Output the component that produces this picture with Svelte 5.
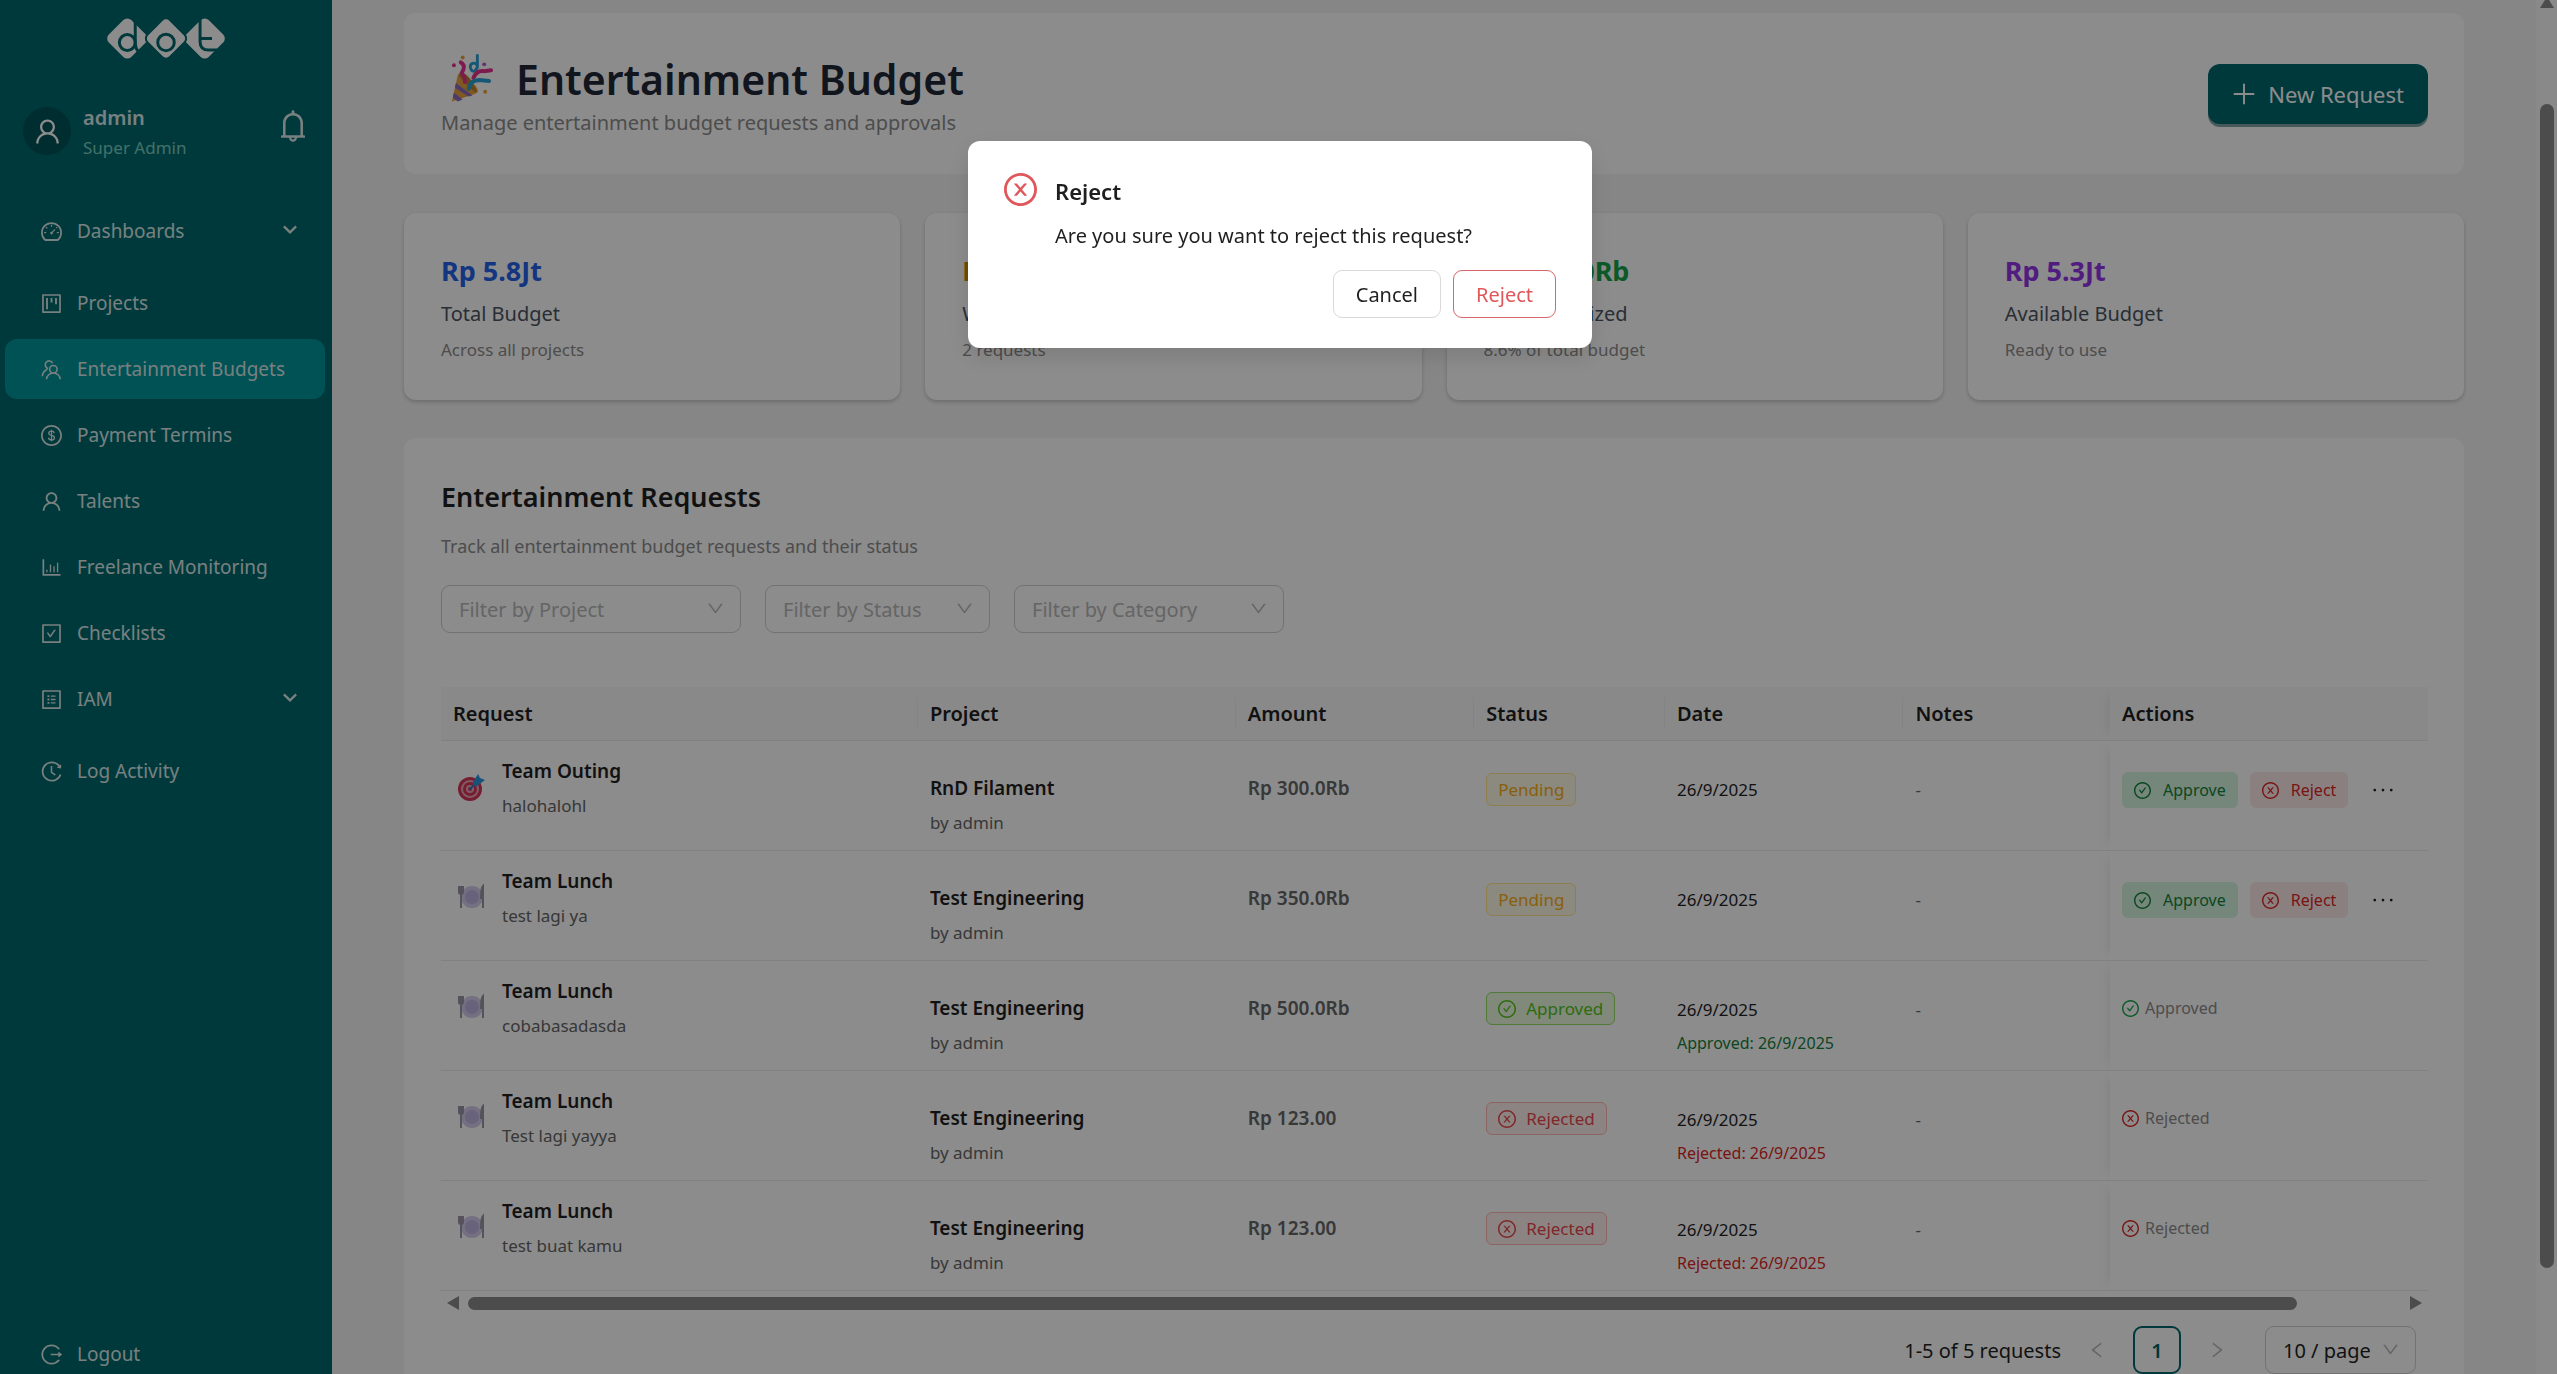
<script>
  const RING =
    "M512 64C264.6 64 64 264.6 64 512s200.6 448 448 448 448-200.6 448-448S759.4 64 512 64zm0 820c-205.4 0-372-166.6-372-372s166.6-372 372-372 372 166.6 372 372-166.6 372-372 372z";
  const FRAME =
    "M880 112H144c-17.7 0-32 14.3-32 32v736c0 17.7 14.3 32 32 32h736c17.7 0 32-14.3 32-32V144c0-17.7-14.3-32-32-32zm-40 728H184V184h656v656z";

  // fill and stroke paths on a 1024 grid
  const icons = {
    user: {
      fill: "M858.5 763.6a374 374 0 00-80.6-119.5 375.63 375.63 0 00-119.5-80.6c-.4-.2-.8-.3-1.2-.5C719.5 518 760 444.7 760 362c0-137-111-248-248-248S264 225 264 362c0 82.7 40.5 156 102.8 201.1-.4.2-.8.3-1.2.5-44.8 18.9-85 46-119.5 80.6a375.63 375.63 0 00-80.6 119.5A371.7 371.7 0 00136 901.8a8 8 0 008 8.2h60c4.4 0 7.9-3.5 8-7.8 2-77.2 33-149.5 87.8-204.3 56.7-56.7 132-87.9 212.2-87.9s155.5 31.2 212.2 87.9C779 752.7 810 825 812 902.2c.1 4.4 3.6 7.8 8 7.8h60a8 8 0 008-8.2c-1-47.8-10.9-94.3-29.5-138.2zM512 534c-45.9 0-89.1-17.9-121.6-50.4S340 407.9 340 362c0-45.9 17.9-89.1 50.4-121.6S466.1 190 512 190s89.1 17.9 121.6 50.4S684 316.1 684 362c0 45.9-17.9 89.1-50.4 121.6S557.9 534 512 534z"
    },
    bell: {
      fill: "M816 768h-24V428c0-141.1-104.3-257.8-240-277.2V112c0-22.1-17.9-40-40-40s-40 17.9-40 40v38.8C336.3 170.2 232 286.9 232 428v340h-24c-17.7 0-32 14.3-32 32v32c0 4.4 3.6 8 8 8h216c0 61.8 50.2 112 112 112s112-50.2 112-112h216c4.4 0 8-3.6 8-8v-32c0-17.7-14.3-32-32-32zM512 888c-26.5 0-48-21.5-48-48h96c0 26.5-21.5 48-48 48zM304 768V428c0-55.6 21.6-107.8 60.9-147.1S456.4 220 512 220c55.6 0 107.8 21.6 147.1 60.9S720 372.4 720 428v340H304z"
    },
    dashboard: {
      fill: "M924.8 385.6a446.7 446.7 0 00-96-142.4 446.7 446.7 0 00-142.4-96C631.1 123.8 572.5 112 512 112s-119.1 11.8-174.4 35.2a446.7 446.7 0 00-142.4 96 446.7 446.7 0 00-96 142.4C75.8 440.9 64 499.5 64 560c0 132.7 58.3 257.7 159.9 343.1l1.7 1.4c5.8 4.8 13.1 7.5 20.6 7.5h531.7c7.5 0 14.8-2.7 20.6-7.5l1.7-1.4C901.7 817.7 960 692.7 960 560c0-60.5-11.9-119.1-35.2-174.4zM761.4 836H262.6A371.12 371.12 0 01140 560c0-99.4 38.7-192.8 109-263 70.3-70.3 163.7-109 263-109 99.4 0 192.8 38.7 263 109 70.3 70.3 109 163.7 109 263 0 105.6-44.5 205.5-122.6 276zM456 580a56 56 0 10112 0 56 56 0 10-112 0z",
      stroke: "M520 572L660 420M512 226v84M740 560h84M200 560h84M276 324l56 56M748 324l-40 40",
      width: 48
    },
    project: {
      fill: FRAME + "M280 272h80v480h-80zM472 272h80v200h-80zM664 272h80v272h-80z"
    },
    party: {
      stroke:
        "M592 340a160 160 0 110 320 160 160 0 010-320zM300 930C310 770 440 664 592 664S874 770 884 930M366 470A165 165 0 11560 240M120 800C124 676 200 570 330 500",
      width: 68
    },
    dollar: {
      fill: RING,
      stroke:
        "M628 410C618 350 570 326 512 326c-66 0-118 36-118 92 0 130 244 56 244 186 0 62-56 98-126 98-72 0-120-36-128-98M512 262v500",
      width: 54
    },
    chart: {
      fill: "M888 792H200V168c0-4.4-3.6-8-8-8h-56c-4.4 0-8 3.6-8 8v688c0 4.4 3.6 8 8 8h752c4.4 0 8-3.6 8-8v-56c0-4.4-3.6-8-8-8zM288 604h56v108h-56zM440 384h56v328h-56zM592 462h56v250h-56zM744 304h56v408h-56z"
    },
    checkSquare: {
      fill:
        FRAME +
        "M433.1 657.7a31.8 31.8 0 0051.7 0l210.6-292c3.8-5.3 0-12.7-6.5-12.7H642c-10.2 0-19.9 4.9-25.9 13.3L459 584.3l-71.2-98.8c-6-8.3-15.6-13.3-25.9-13.3H315c-6.5 0-10.3 7.4-6.5 12.7l124.6 172.8z"
    },
    list: {
      fill:
        FRAME +
        "M484 340h200v56H484zM484 484h200v56H484zM484 628h200v56H484zM340 328h80v80h-80zM340 472h80v80h-80zM340 616h80v80h-80z"
    },
    history: {
      fill: "M536.1 273H488c-4.4 0-8 3.6-8 8v275.3c0 2.6 1.2 5 3.3 6.5l165.3 120.7c3.6 2.6 8.6 1.9 11.2-1.7l28.6-39c2.7-3.7 1.9-8.7-1.7-11.2L544.1 528.5V281c0-4.4-3.6-8-8-8zm219.8 75.2l156.8 38.3c5 1.2 9.9-2.6 9.9-7.7l.8-161.5c0-6.7-7.7-10.5-12.9-6.3L752.9 334.1a8 8 0 003 14.1zm167.7 301.1l-56.7-19.5a8 8 0 00-10.1 4.8c-1.9 5.1-3.9 10.1-6 15.1-17.8 42.1-43.3 80-75.9 112.5a353 353 0 01-112.5 75.9 352.18 352.18 0 01-137.7 27.8c-47.8 0-94.1-9.3-137.7-27.8a353 353 0 01-112.5-75.9c-32.5-32.5-58-70.4-75.9-112.5A353.44 353.44 0 01171 512c0-47.8 9.3-94.2 27.8-137.8 17.8-42.1 43.3-80 75.9-112.5a353 353 0 01112.5-75.9C430.6 167.3 477 158 524.8 158s94.1 9.3 137.7 27.8A353 353 0 01775 261.7c10.2 10.3 19.8 21 28.6 32.3l59.8-46.8C784.7 146.6 662.2 81.9 524.6 82 285 82.1 92.6 276.7 95 516.4 97.4 751.9 288.9 942 524.8 942c185.5 0 343.5-117.6 403.7-282.3 1.5-4.2-.7-8.9-4.9-10.4z"
    },
    logout: {
      fill: "M868 732h-70.3c-4.8 0-9.3 2.1-12.3 5.8-7 8.5-14.5 16.7-22.4 24.5a353.84 353.84 0 01-112.7 75.9A352.8 352.8 0 01512.4 866c-47.9 0-94.3-9.4-137.9-27.8a353.84 353.84 0 01-112.7-75.9 353.28 353.28 0 01-76-112.5C167.3 606.2 158 559.9 158 512s9.4-94.2 27.8-137.8c17.8-42.1 43.4-80 76-112.5s70.5-58.1 112.7-75.9c43.6-18.4 90-27.8 137.9-27.8 47.9 0 94.3 9.3 137.9 27.8 42.2 17.8 80.1 43.4 112.7 75.9 7.9 7.9 15.3 16.1 22.4 24.5 3 3.7 7.6 5.8 12.3 5.8H868c6.3 0 10.2-7 6.7-12.3C798 160.5 663.8 81.6 511.3 82 271.7 82.6 79.6 277.1 82 516.4 84.4 751.9 276.2 942 512.4 942c152.1 0 285.7-78.8 362.3-197.7 3.4-5.3-.4-12.3-6.7-12.3zm88.9-226.3L815 393.7c-5.3-4.2-13-.4-13 6.3v76H488c-4.4 0-8 3.6-8 8v56c0 4.4 3.6 8 8 8h314v76c0 6.7 7.8 10.5 13 6.3l141.9-112a8 8 0 000-12.6z"
    },
    down: {
      fill: "M884 256h-75c-5.1 0-9.9 2.5-12.9 6.6L512 654.2 227.9 262.6c-3-4.1-7.8-6.6-12.9-6.6h-75c-6.5 0-10.3 7.4-6.5 12.7l352.6 486.1c12.8 17.6 39 17.6 51.7 0l352.6-486.1c3.9-5.3.1-12.7-6.4-12.7z"
    },
    arrow: { stroke: "M120 340L512 730 904 340", width: 150 },
    left: {
      fill: "M724 218.3V141c0-6.7-7.7-10.4-12.9-6.3L260.3 486.8a31.86 31.86 0 000 50.3l450.8 352.1c5.3 4.1 12.9.4 12.9-6.3v-77.3c0-4.9-2.3-9.6-6.1-12.6l-360-281 360-281.1c3.8-3 6.1-7.7 6.1-12.6z"
    },
    right: {
      fill: "M765.7 486.8L314.9 134.7A7.97 7.97 0 00302 141v77.3c0 4.9 2.3 9.6 6.1 12.6l360 281.1-360 281.1c-3.9 3-6.1 7.7-6.1 12.6V883c0 6.7 7.7 10.4 12.9 6.3l450.8-352.1a31.96 31.96 0 000-50.4z"
    },
    plus: { stroke: "M512 130v764M130 512h764", width: 72 },
    check: {
      fill:
        RING +
        "M699 353h-46.9c-10.2 0-19.9 4.9-25.9 13.3L469 584.3l-71.2-98.8c-6-8.3-15.6-13.3-25.9-13.3H325c-6.5 0-10.3 7.4-6.5 12.7l124.6 172.8a31.8 31.8 0 0051.7 0l210.6-292c3.9-5.3.1-12.7-6.4-12.7z"
    },
    close: {
      fill:
        RING +
        "M685.4 354.8c0-4.4-3.6-8-8-8l-66 .3L512 465.6l-99.3-118.4-66.1-.3c-4.4 0-8 3.5-8 8 0 1.9.7 3.7 1.9 5.2l130.1 155L340.5 670a8.32 8.32 0 00-1.9 5.2c0 4.4 3.6 8 8 8l66.1-.3L512 564.4l99.3 118.4 66 .3c4.4 0 8-3.5 8-8 0-1.9-.7-3.7-1.9-5.2L553.5 515l130.1-155c1.2-1.4 1.8-3.3 1.8-5.2z"
    },
    dots: {
      fill: "M176 512m-56 0a56 56 0 10112 0 56 56 0 10-112 0zM512 512m-56 0a56 56 0 10112 0 56 56 0 10-112 0zM848 512m-56 0a56 56 0 10112 0 56 56 0 10-112 0z"
    }
  };

  const menu = [
    { label: "Dashboards", icon: "dashboard", sub: true },
    { label: "Projects", icon: "project" },
    { label: "Entertainment Budgets", icon: "party", active: true },
    { label: "Payment Termins", icon: "dollar" },
    { label: "Talents", icon: "user" },
    { label: "Freelance Monitoring", icon: "chart" },
    { label: "Checklists", icon: "checkSquare" },
    { label: "IAM", icon: "list", sub: true },
    { label: "Log Activity", icon: "history" }
  ];

  const stats = [
    { value: "Rp 5.8Jt", label: "Total Budget", note: "Across all projects", color: "blue" },
    { value: "Rp 650.0Rb", label: "Waiting Approval", note: "2 requests", color: "yellow" },
    { value: "Rp 500.0Rb", label: "Budget Utilized", note: "8.6% of total budget", color: "green" },
    { value: "Rp 5.3Jt", label: "Available Budget", note: "Ready to use", color: "purple" }
  ];

  const filters = [
    { id: "project", label: "Filter by Project" },
    { id: "status", label: "Filter by Status" },
    { id: "category", label: "Filter by Category" }
  ];

  const columns = ["Request", "Project", "Amount", "Status", "Date", "Notes", "Actions"];

  const date = "26/9/2025";
  const requests = [
    { type: "Team Outing", desc: "halohalohl", project: "RnD Filament", amount: "Rp 300.0Rb", status: "Pending" },
    { type: "Team Lunch", desc: "test lagi ya", project: "Test Engineering", amount: "Rp 350.0Rb", status: "Pending" },
    { type: "Team Lunch", desc: "cobabasadasda", project: "Test Engineering", amount: "Rp 500.0Rb", status: "Approved" },
    { type: "Team Lunch", desc: "Test lagi yayya", project: "Test Engineering", amount: "Rp 123.00", status: "Rejected" },
    { type: "Team Lunch", desc: "test buat kamu", project: "Test Engineering", amount: "Rp 123.00", status: "Rejected" }
  ];

  let confirming = $state(true);

  function closeModal() {
    confirming = false;
  }

  function askReject() {
    confirming = true;
  }
</script>

{#snippet icon(name)}
  <svg class="icon" viewBox="64 64 896 896" aria-hidden="true">
    {#if icons[name].fill}
      <path d={icons[name].fill} fill="currentColor" fill-rule="evenodd" />
    {/if}
    {#if icons[name].stroke}
      <path d={icons[name].stroke} fill="none" stroke="currentColor" stroke-width={icons[name].width} />
    {/if}
  </svg>
{/snippet}

{#snippet popper()}
  <svg class="popper" viewBox="0 0 44 50" aria-hidden="true">
    <path d="M2 48L8 21q2-4 8 1l10 10q5 6 0 8z" fill="#e8a33d" />
    <path d="M6 29l17 13-4 1L5 34zM4 39l9 7-5 2-5-4z" fill="#8a6bbf" />
    <path d="M11 18q10 2 17 21-5-1-10-7T9 22z" fill="#b9832c" />
    <path d="M11 8q6 3 1 11 4 5 3 9" fill="none" stroke="#e3318f" stroke-width="4" stroke-linecap="round" />
    <path d="M28 1v12q-3 6-6 3-3-5 1-7 3-1 5 2" fill="none" stroke="#2a9fd8" stroke-width="3" stroke-linecap="round" />
    <path d="M24 24q3-8 11-7l7-1" fill="none" stroke="#e3318f" stroke-width="4" stroke-linecap="round" />
    <path d="M19 35q2-9 11-9l10 1" fill="none" stroke="#2a9fd8" stroke-width="4" stroke-linecap="round" />
    <circle cx="4" cy="11" r="2" fill="#e3318f" />
    <circle cx="13" cy="3" r="2" fill="#e8a33d" />
    <circle cx="35" cy="10" r="2" fill="#b05fd0" />
    <circle cx="36" cy="38" r="2" fill="#e8a33d" />
  </svg>
{/snippet}

{#snippet target()}
  <svg class="kind" viewBox="0 0 28 28" aria-hidden="true">
    <circle cx="12" cy="16" r="12" fill="#d9365a" />
    <circle cx="12" cy="16" r="9" fill="#e9a9ba" />
    <circle cx="12" cy="16" r="7" fill="#d9365a" />
    <circle cx="12" cy="16" r="4" fill="#e9a9ba" />
    <circle cx="12" cy="16" r="2" fill="#d9365a" />
    <path d="M12 16l10-10" stroke="#2483c5" stroke-width="2" />
    <path d="M15 9l5-8 2 4 5 2-8 6-4-1z" fill="#2a95dd" />
  </svg>
{/snippet}

{#snippet plate()}
  <svg class="kind" viewBox="0 0 28 28" aria-hidden="true">
    <circle cx="14" cy="14" r="11" fill="#d3cbec" />
    <circle cx="14" cy="14" r="7" fill="#bdb2df" />
    <path d="M1 3v6q0 2 2 2v14M3 3v8M5 3v6q0 2-2 2M25 25V3q-2 2-2 12h2" fill="none" stroke="#9b95a6" stroke-width="2" />
  </svg>
{/snippet}

<div class="layout">
  <aside class="sidebar">
    <svg class="logo" viewBox="316 50 362 130" role="img" aria-label="dot">
      <g fill="#fff">
        <rect x="332" y="67" width="96" height="96" rx="17" transform="rotate(45 380 115)" />
        <rect x="566" y="67" width="96" height="96" rx="17" transform="rotate(45 614 115)" />
      </g>
      <rect class="edge" x="449" y="67" width="96" height="96" rx="17" transform="rotate(45 497 115)" />
      <g class="cut">
        <circle cx="380" cy="127" r="24" />
        <path d="M404 52v75q0 16 8 26" />
        <circle cx="497" cy="127" r="25" />
        <path d="M600 48v76q0 26 26 26h26M604 115h32" />
      </g>
    </svg>

    <div class="profile">
      <span class="avatar">{@render icon("user")}</span>
      <div class="who">
        <strong>admin</strong>
        <span>Super Admin</span>
      </div>
      <button class="bell" aria-label="Notifications">{@render icon("bell")}</button>
    </div>

    <nav>
      {#each menu as item}
        <a href="#{item.icon}" class:active={item.active} class:sub={item.sub}>
          {@render icon(item.icon)}
          <span>{item.label}</span>
          {#if item.sub}<i>{@render icon("arrow")}</i>{/if}
        </a>
      {/each}
      <a href="#logout" class="logout">
        {@render icon("logout")}
        <span>Logout</span>
      </a>
    </nav>
  </aside>

  <main>
    <header class="card head">
      <div>
        <h1>{@render popper()}Entertainment Budget</h1>
        <p>Manage entertainment budget requests and approvals</p>
      </div>
      <button class="new">{@render icon("plus")}New Request</button>
    </header>

    <section class="stats">
      {#each stats as stat}
        <article class="card stat">
          <strong class={stat.color}>{stat.value}</strong>
          <span>{stat.label}</span>
          <small>{stat.note}</small>
        </article>
      {/each}
    </section>

    <section class="card list">
      <h2>Entertainment Requests</h2>
      <p class="hint">Track all entertainment budget requests and their status</p>

      <div class="filters">
        {#each filters as filter}
          <div class="select by-{filter.id}">
            <select id={filter.id} aria-label={filter.label}>
              <option>{filter.label}</option>
            </select>
            {@render icon("down")}
          </div>
        {/each}
      </div>

      <table>
        <colgroup>
          {#each columns as column}<col class="col-{column.toLowerCase()}" />{/each}
        </colgroup>
        <thead>
          <tr>
            {#each columns as column}<th>{column}</th>{/each}
          </tr>
        </thead>
        <tbody>
          {#each requests as request}
            <tr>
              <td class="first">
                <div class="request">
                  {#if request.type === "Team Outing"}{@render target()}{:else}{@render plate()}{/if}
                  <div>
                    <b>{request.type}</b>
                    <span class="muted">{request.desc}</span>
                  </div>
                </div>
              </td>
              <td><b>{request.project}</b><span class="muted">by admin</span></td>
              <td><b class="amount">{request.amount}</b></td>
              <td>
                <span class="tag {request.status.toLowerCase()}">
                  {#if request.status === "Approved"}{@render icon("check")}{/if}
                  {#if request.status === "Rejected"}{@render icon("close")}{/if}
                  {request.status}
                </span>
              </td>
              <td>
                <span class="date">{date}</span>
                {#if request.status !== "Pending"}
                  <span class="decided {request.status.toLowerCase()}">{request.status}: {date}</span>
                {/if}
              </td>
              <td><span class="muted">-</span></td>
              <td>
                {#if request.status === "Pending"}
                  <div class="actions">
                    <button class="approve">{@render icon("check")}Approve</button>
                    <button class="reject" onclick={askReject}>{@render icon("close")}Reject</button>
                    <button class="more" aria-label="More">{@render icon("dots")}</button>
                  </div>
                {:else}
                  <div class="done {request.status.toLowerCase()}">
                    {@render icon(request.status === "Approved" ? "check" : "close")}
                    <span>{request.status}</span>
                  </div>
                {/if}
              </td>
            </tr>
          {/each}
        </tbody>
      </table>

      <div class="hbar">
        <svg viewBox="0 0 12 16" aria-hidden="true"><path d="M12 1v14L0 8z" /></svg>
        <div class="track"><div class="thumb"></div></div>
        <svg viewBox="0 0 12 16" aria-hidden="true"><path d="M0 1v14l12-7z" /></svg>
      </div>

      <footer>
        <span>1-5 of 5 requests</span>
        <button class="step" aria-label="Previous page" disabled>{@render icon("left")}</button>
        <button class="page">1</button>
        <button class="step" aria-label="Next page" disabled>{@render icon("right")}</button>
        <div class="select size">
          <select id="page-size" aria-label="Page size">
            <option>10 / page</option>
          </select>
          {@render icon("down")}
        </div>
      </footer>
    </section>
  </main>

  <div class="vbar">
    <svg viewBox="0 0 14 8" aria-hidden="true"><path d="M5 0h4l5 8H0z" /></svg>
    <div class="thumb"></div>
  </div>
</div>

{#if confirming}
  <div class="mask">
    <div class="modal" role="dialog" aria-modal="true" aria-labelledby="confirm-title">
      {@render icon("close")}
      <div class="message">
        <h3 id="confirm-title">Reject</h3>
        <p>Are you sure you want to reject this request?</p>
      </div>
      <div class="buttons">
        <button onclick={closeModal}>Cancel</button>
        <button class="danger" onclick={closeModal}>Reject</button>
      </div>
    </div>
  </div>
{/if}

<style>
  :global(body) {
    margin: 0;
    overflow: hidden;
  }
  .layout,
  .mask {
    font-family: "Noto Sans", "Segoe UI", sans-serif;
    font-size: 20px;
    line-height: 33px;
    color: #1f1f1f;
  }
  .layout {
    display: flex;
    height: 100vh;
    overflow: hidden;
    background: #f5f5f5;
  }
  .layout *,
  .mask * {
    box-sizing: border-box;
  }
  h1,
  h2,
  h3,
  p {
    margin: 0;
  }
  button,
  select {
    font: inherit;
    color: inherit;
    background: none;
    border: 0;
    padding: 0;
    cursor: pointer;
  }
  .icon {
    display: block;
    flex: none;
    width: 21px;
    height: 21px;
  }

  .sidebar {
    flex: none;
    width: 332px;
    display: flex;
    flex-direction: column;
    background: #00696d;
    color: #dbe9e9;
  }
  .logo {
    flex: none;
    align-self: center;
    width: 120px;
    height: 43px;
    margin-top: 17px;
  }
  .edge {
    fill: #fff;
    stroke: #00696d;
    stroke-width: 6;
  }
  .cut {
    fill: none;
    stroke: #00696d;
    stroke-width: 9;
  }
  .profile {
    display: flex;
    align-items: center;
    gap: 12px;
    height: 60px;
    margin-top: 41px;
    padding: 0 23px;
  }
  .avatar {
    display: grid;
    place-items: center;
    width: 48px;
    height: 48px;
    border-radius: 50%;
    background: #005257;
    color: #fff;
  }
  .avatar .icon {
    width: 27px;
    height: 27px;
  }
  .who {
    flex: 1;
    display: flex;
    flex-direction: column;
    padding-top: 4px;
    line-height: 30px;
  }
  .who strong {
    font-weight: 600;
  }
  .who span {
    font-size: 17px;
    color: #7ccdc0;
  }
  .bell {
    align-self: flex-start;
    margin-top: 9px;
  }
  .bell .icon {
    width: 32px;
    height: 32px;
  }
  nav {
    flex: 1;
    display: flex;
    flex-direction: column;
    gap: 6px;
    padding: 40px 7px 0 5px;
    font-size: 19px;
  }
  nav a {
    display: flex;
    align-items: center;
    gap: 15px;
    height: 60px;
    padding: 0 28px 0 36px;
    border-radius: 12px;
    color: inherit;
    text-decoration: none;
  }
  nav a span {
    flex: 1;
  }
  nav .sub {
    margin-bottom: 6px;
  }
  nav i {
    padding-bottom: 4px;
  }
  nav i .icon {
    width: 14px;
    height: 14px;
  }
  nav .active {
    background: #009599;
  }
  nav .logout {
    margin-top: auto;
    margin-bottom: -10px;
  }

  main {
    flex: 1;
    min-width: 0;
    display: flex;
    flex-direction: column;
    padding: 13px 72px 0;
  }
  .card {
    background: #fff;
    border-radius: 12px;
  }
  .head {
    display: flex;
    justify-content: space-between;
    align-items: flex-start;
    padding: 40px 36px 35px 37px;
  }
  .head p {
    margin-top: 1px;
    color: #8c8c8c;
  }
  h1 {
    display: flex;
    align-items: center;
    gap: 23px;
    padding-left: 9px;
    font-size: 41px;
    font-weight: 600;
    line-height: 52px;
    color: #1f2937;
  }
  .popper {
    width: 43px;
    height: 50px;
  }
  .new {
    display: flex;
    align-items: center;
    gap: 12px;
    height: 60px;
    margin-top: 11px;
    padding: 0 24px;
    border-radius: 12px;
    background: #00696d;
    box-shadow: 0 3px 0 rgba(5, 75, 80, 0.5);
    color: #fff;
    font-size: 22px;
  }
  .new .icon {
    width: 24px;
    height: 24px;
  }

  .stats {
    display: grid;
    grid-template-columns: repeat(4, 1fr);
    gap: 25px;
    margin-top: 39px;
  }
  .stat {
    display: flex;
    flex-direction: column;
    padding: 38px 37px 37px;
    box-shadow: 0 2px 4px rgba(0, 0, 0, 0.2);
  }
  .stat strong {
    font-size: 27px;
    font-weight: 700;
    line-height: 40px;
  }
  .stat span {
    line-height: 46px;
    color: #4b5563;
  }
  .stat small {
    font-size: 17px;
    line-height: 26px;
    color: #8c8c8c;
  }
  .blue {
    color: #2563eb;
  }
  .yellow {
    color: #ca8a04;
  }
  .green {
    color: #16a34a;
  }
  .purple {
    color: #9333ea;
  }

  .list {
    flex: none;
    margin-top: 38px;
    padding: 36px 36px 36px 37px;
  }
  h2 {
    font-size: 27px;
    font-weight: 600;
    line-height: 46px;
  }
  .hint {
    margin-top: 10px;
    color: #8c8c8c;
    font-size: 18px;
  }
  .filters {
    display: flex;
    gap: 24px;
    margin: 22px 0 54px;
  }
  .select {
    position: relative;
    height: 48px;
    color: #b8b8b8;
  }
  .select select {
    appearance: none;
    width: 100%;
    height: 100%;
    padding: 0 44px 0 17px;
    border: 1px solid #d0d0d0;
    border-radius: 9px;
  }
  .select .icon {
    position: absolute;
    right: 17px;
    top: 15px;
    width: 17px;
    height: 17px;
    pointer-events: none;
  }
  .by-project {
    width: 300px;
  }
  .by-status {
    width: 225px;
  }
  .by-category {
    width: 270px;
  }

  table {
    width: 100%;
    table-layout: fixed;
    border-spacing: 0;
  }
  .col-request {
    width: 24%;
  }
  .col-project,
  .col-actions {
    width: 16%;
  }
  .col-amount,
  .col-date {
    width: 12%;
  }
  .col-status {
    width: 9.6%;
  }
  .col-notes {
    width: 10.4%;
  }
  th {
    position: relative;
    height: 54px;
    padding: 0 12px;
    text-align: left;
    font-weight: 600;
    background: #fafafa;
    border-bottom: 1px solid #ececec;
  }
  th:not(:nth-last-child(-n + 2))::after {
    content: "";
    position: absolute;
    right: 0;
    top: 10px;
    height: 32px;
    width: 1px;
    background: #f0f0f0;
  }
  td {
    height: 110px;
    padding: 31px 12px 0;
    vertical-align: top;
    border-bottom: 1px solid #ececec;
  }
  td.first {
    padding: 14px 17px 0;
  }
  th:last-child,
  td:last-child {
    box-shadow: -12px 0 10px -8px rgba(5, 5, 5, 0.06);
  }
  td b {
    display: block;
    font-size: 19px;
    font-weight: 600;
  }
  .muted {
    display: block;
    font-size: 17px;
    line-height: 36px;
    color: #666;
  }
  .request {
    display: flex;
    gap: 16px;
  }
  .kind {
    flex: none;
    width: 28px;
    height: 28px;
    margin-top: 18px;
  }
  td .amount {
    color: #666;
  }
  .tag {
    display: inline-flex;
    align-items: center;
    gap: 10px;
    height: 33px;
    padding: 0 11px;
    border: 1px solid;
    border-radius: 6px;
    font-size: 17px;
  }
  .tag .icon {
    width: 18px;
    height: 18px;
  }
  .tag.pending {
    color: #faad14;
    background: #fffbe6;
    border-color: #ffe58f;
  }
  .tag.approved {
    color: #52c41a;
    background: #ecfadf;
    border-color: #95de64;
  }
  .tag.rejected {
    color: #e8484c;
    background: #fff0ee;
    border-color: #ffb8b3;
  }
  .date {
    display: block;
    font-size: 17px;
    line-height: 36px;
  }
  .decided {
    display: block;
    font-size: 16px;
    line-height: 30px;
  }
  .decided.approved {
    color: #15803d;
  }
  .decided.rejected {
    color: #dc2626;
  }
  .actions {
    display: flex;
    align-items: center;
    gap: 12px;
  }
  .actions button {
    display: flex;
    align-items: center;
    gap: 12px;
    height: 36px;
    padding: 0 12px;
    border-radius: 6px;
    font-size: 16px;
  }
  .actions .icon,
  .done .icon {
    width: 17px;
    height: 17px;
  }
  .actions .approve {
    color: #15803d;
    background: #d3f6df;
  }
  .actions .reject {
    color: #dc2626;
    background: #fdeaea;
  }
  .actions .more .icon {
    width: 22px;
    height: 22px;
  }
  .done {
    display: flex;
    align-items: center;
    gap: 6px;
    font-size: 16px;
  }
  .done span {
    color: #8c8c8c;
  }
  .done.approved {
    color: #16a34a;
  }
  .done.rejected {
    color: #dc2626;
  }

  .hbar {
    display: flex;
    align-items: center;
    gap: 9px;
    height: 24px;
    padding: 0 6px;
    fill: #8a8a8a;
  }
  .hbar svg {
    width: 12px;
    height: 16px;
  }
  .track {
    flex: 1;
  }
  .hbar .thumb {
    width: 94.6%;
    height: 13px;
  }
  .thumb {
    border-radius: 7px;
    background: #8a8a8a;
  }
  footer {
    display: flex;
    align-items: center;
    justify-content: flex-end;
    gap: 12px;
    height: 48px;
    margin-top: 11px;
    padding-right: 12px;
  }
  .step {
    display: grid;
    place-items: center;
    width: 48px;
    height: 48px;
    color: #b8b8b8;
  }
  .step .icon {
    width: 18px;
    height: 18px;
  }
  .page {
    width: 48px;
    height: 48px;
    border: 2px solid #00696d;
    border-radius: 9px;
    color: #00696d;
    font-weight: 600;
  }
  .select.size {
    width: 151px;
    margin-left: 12px;
  }
  .size select {
    color: #1f1f1f;
  }

  .vbar {
    flex: none;
    width: 21px;
    display: flex;
    flex-direction: column;
    align-items: center;
    gap: 96px;
    background: #fafafa;
    fill: #8a8a8a;
  }
  .vbar svg {
    flex: none;
    width: 14px;
    height: 8px;
  }
  .vbar .thumb {
    width: 14px;
    height: 1164px;
  }

  .mask {
    position: fixed;
    inset: 0;
    display: flex;
    justify-content: center;
    align-items: flex-start;
    padding: 141px 0 0 3px;
    background: rgba(0, 0, 0, 0.45);
  }
  .modal {
    display: grid;
    grid-template-columns: 33px 1fr;
    column-gap: 18px;
    width: 624px;
    padding: 32px 36px 30px;
    border-radius: 12px;
    background: #fff;
    box-shadow: 0 9px 24px rgba(0, 0, 0, 0.12);
  }
  .modal > .icon {
    width: 33px;
    height: 33px;
    color: #e0575b;
  }
  h3 {
    font-size: 22px;
    font-weight: 600;
    line-height: 36px;
  }
  .message p {
    margin-top: 10px;
  }
  .buttons {
    grid-column: 1 / -1;
    display: flex;
    justify-content: flex-end;
    gap: 12px;
    margin-top: 18px;
  }
  .buttons button {
    height: 48px;
    padding: 0 22px;
    border: 1px solid #d9d9d9;
    border-radius: 9px;
  }
  .buttons .danger {
    color: #e0575b;
    border-color: #d9666a;
  }
</style>
